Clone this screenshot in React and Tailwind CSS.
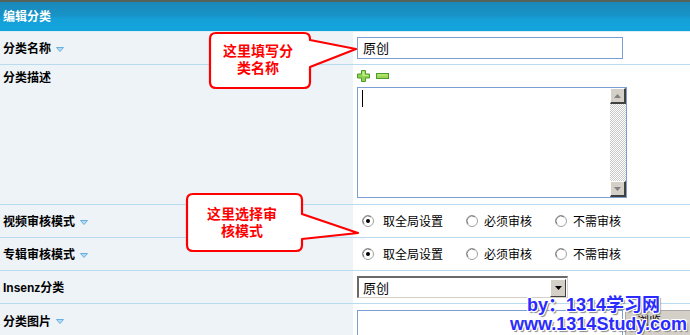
import React from "react";

const Tri = () => (
  <svg width="8" height="5" viewBox="0 0 8 5" className="ml-[5px] mt-[2px]">
    <path d="M0.5,0.5 H7.5 L4,4.5 Z" fill="#b5daf3" stroke="#6aaee0" strokeWidth="1" />
  </svg>
);

const Label = ({ children, tri = true, top = false }) => (
  <div
    className={`w-[353px] shrink-0 bg-[#eef3f8] pl-[3px] flex ${
      top ? "items-start pt-[4px]" : "items-center"
    } font-bold text-[12px] text-black`}
  >
    <span className="leading-[16px]">{children}</span>
    {tri && <Tri />}
  </div>
);

const Radio = ({ checked }) => (
  <svg width="12" height="12" viewBox="0 0 12 12" className="shrink-0">
    <circle cx="6" cy="6" r="5.5" fill="#ffffff" stroke="#a0a0a0" />
    <path d="M2,9 A5,5 0 0 1 9,2" fill="none" stroke="#808080" strokeWidth="1" />
    {checked && <circle cx="6" cy="6" r="2" fill="#000" />}
  </svg>
);

const RadioRow = () => (
  <div className="flex items-center text-[12px] pl-[9px] font-['Noto_Sans_CJK_SC',sans-serif]">
    <Radio checked />
    <span className="ml-[9px] w-[83px]">取全局设置</span>
    <Radio />
    <span className="ml-[6px] w-[71px]">必须审核</span>
    <Radio />
    <span className="ml-[6px]">不需审核</span>
  </div>
);

const ScrollBtn = ({ down }) => (
  <div className="w-[16px] h-[16px] bg-[#d4d0c8] border-t border-l border-t-[#ffffff] border-l-[#ffffff] border-r-2 border-b-2 border-r-[#404040] border-b-[#404040] flex items-center justify-center">
    <svg width="7" height="4" viewBox="0 0 7 4">
      {down ? (
        <path d="M0,0 H7 L3.5,4 Z" fill="#808080" />
      ) : (
        <path d="M0,4 H7 L3.5,0 Z" fill="#808080" />
      )}
    </svg>
  </div>
);

export default function App() {
  return (
    <div className="relative w-[690px] h-[335px] overflow-hidden bg-white font-['Noto_Sans_CJK_SC',sans-serif] text-[12px] text-black">
      {/* header */}
      <div className="h-[32px] border-t-2 border-t-[#55645a] border-b border-b-[#dcedf7] bg-[linear-gradient(#1a88b9,#1893c6_45%,#15a0d7_60%,#13a4dd)] flex items-center pl-[3px]">
        <span className="text-white font-bold text-[12px] leading-[16px] mb-[2px]">编辑分类</span>
      </div>

      {/* row 1 */}
      <div className="flex h-[33px] border-b border-b-[#b9dbf0]">
        <Label>分类名称</Label>
        <div className="flex-1 flex items-center pl-[4px]">
          <div className="w-[266px] h-[22px] border border-[#7b9fd2] bg-white flex items-center pl-[5px] text-[13px]">
            原创
          </div>
        </div>
      </div>

      {/* row 2 */}
      <div className="flex h-[140px] border-b border-b-[#b9dbf0]">
        <Label top tri={false}>分类描述</Label>
        <div className="flex-1 pl-[4px] pt-[5px] flex flex-col">
          <div className="flex items-center gap-[6px] h-[12px]">
            <svg width="13" height="12" viewBox="0 0 13 12">
              <path
                d="M4.5,0.5 H8.5 V4 H12.5 V8 H8.5 V11.5 H4.5 V8 H0.5 V4 H4.5 Z"
                fill="#8fd34c"
                stroke="#4f9a2a"
              />
              <path d="M5.5,1.5 H7.5 V5 H11.5 V6 H5.5 Z" fill="#c6ef8e" />
            </svg>
            <svg width="13" height="6" viewBox="0 0 13 6">
              <rect x="0.5" y="0.5" width="12" height="5" fill="#9cd655" stroke="#4f9a2a" />
              <rect x="1.5" y="1.5" width="10" height="1" fill="#c6ef8e" />
            </svg>
          </div>
          <div className="mt-[5px] w-[270px] h-[111px] border border-[#7b9fd2] bg-white flex">
            <div className="flex-1 relative">
              <div className="absolute left-[4px] top-[2px] w-[1px] h-[17px] bg-black" />
            </div>
            <div className="w-[16px] flex flex-col bg-[repeating-conic-gradient(#c8c8c8_0%_25%,#ffffff_0%_50%)] bg-[length:2px_2px]">
              <ScrollBtn />
              <div className="flex-1" />
              <ScrollBtn down />
            </div>
          </div>
        </div>
      </div>

      {/* row 3 */}
      <div className="flex h-[33px] border-b border-b-[#b9dbf0]">
        <Label>视频审核模式</Label>
        <div className="flex-1 flex items-center">
          <RadioRow />
        </div>
      </div>

      {/* row 4 */}
      <div className="flex h-[33px] border-b border-b-[#b9dbf0]">
        <Label>专辑审核模式</Label>
        <div className="flex-1 flex items-center">
          <RadioRow />
        </div>
      </div>

      {/* row 5 */}
      <div className="flex h-[33px] border-b border-b-[#b9dbf0]">
        <Label tri={false}>
          <span className="font-['Liberation_Sans',sans-serif]">Insenz</span>分类
        </Label>
        <div className="flex-1 flex items-center pl-[4px]">
          <div className="w-[211px] h-[22px] border-t-2 border-l-2 border-t-[#6a6a6a] border-l-[#6a6a6a] border-b border-r border-b-[#d4d0c8] border-r-[#d4d0c8] bg-white flex items-center">
            <span className="flex-1 pl-[4px] text-[13px]">原创</span>
            <div className="w-[16px] h-[18px] mr-[1px] bg-[#d4d0c8] border-t border-l border-t-white border-l-white border-r border-b border-r-[#404040] border-b-[#404040] flex items-center justify-center">
              <svg width="7" height="4" viewBox="0 0 7 4">
                <path d="M0,0 H7 L3.5,4 Z" fill="#000" />
              </svg>
            </div>
          </div>
        </div>
      </div>

      {/* row 6 */}
      <div className="flex h-[33px]">
        <Label>分类图片</Label>
        <div className="flex-1 flex items-end pl-[4px] gap-[2px]">
          <div className="w-[266px] h-[27px] border border-[#7b9fd2] bg-white" />
          <div className="w-[66px] h-[27px] bg-[#d4d0c8] border border-[#a8a8a8] flex items-start pl-[11px] pt-[1px] text-[12px]">
            浏览
          </div>
        </div>
      </div>

      {/* callouts */}
      <svg className="absolute left-0 top-0 pointer-events-none" width="690" height="335">
        <path
          d="M216,33 H304 Q310,33 310,39 V40 L356,49 L310,67 V82 Q310,88 304,88 H216 Q210,88 210,82 V39 Q210,33 216,33 Z"
          fill="#ffffff"
          stroke="#ff0000"
          strokeWidth="2.2"
          strokeLinejoin="round"
        />
        <path
          d="M193,194 H296 Q302,194 302,200 V214 L358,233 L302,239 V245 Q302,251 296,251 H193 Q187,251 187,245 V200 Q187,194 193,194 Z"
          fill="#ffffff"
          stroke="#ff0000"
          strokeWidth="2.2"
          strokeLinejoin="round"
        />
      </svg>
      <div className="absolute left-[210px] top-[42px] w-[96px] text-center text-[#ff0000] font-bold text-[14px] leading-[17px]">
        这里填写分
        <br />
        类名称
      </div>
      <div className="absolute left-[187px] top-[205px] w-[110px] text-center text-[#ff0000] font-bold text-[14px] leading-[17px]">
        这里选择审
        <br />
        核模式
      </div>

      {/* watermark */}
      <div className="absolute left-[527px] top-[295px] text-[18px] leading-[20px] font-bold text-[#2b2bff] font-['Liberation_Sans','Noto_Sans_CJK_SC',sans-serif] whitespace-nowrap [text-shadow:1px_0_0_#fff,-1px_0_0_#fff,0_1px_0_#fff,0_-1px_0_#fff,1px_1px_0_#fff,-1px_-1px_0_#fff,1px_-1px_0_#fff,-1px_1px_0_#fff,2px_2px_1px_#888]">
        by：1314学习网
      </div>
      <div className="absolute left-[510px] top-[314px] text-[18px] leading-[20px] font-bold text-[#2b2bff] font-['Liberation_Sans',sans-serif] whitespace-nowrap [text-shadow:1px_0_0_#fff,-1px_0_0_#fff,0_1px_0_#fff,0_-1px_0_#fff,1px_1px_0_#fff,-1px_-1px_0_#fff,1px_-1px_0_#fff,-1px_1px_0_#fff,2px_2px_1px_#888]">
        www.1314Study.com
      </div>
    </div>
  );
}
